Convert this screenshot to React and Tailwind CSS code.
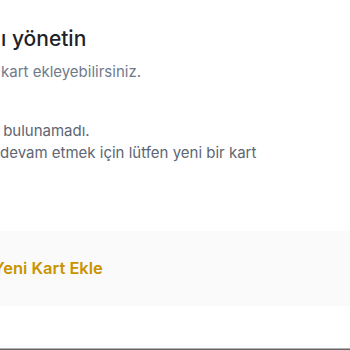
export default function App() {
    return (
        <div className="w-[350px] h-[350px] overflow-hidden bg-white flex flex-col" style={{ fontFamily: 'Inter, "Noto Sans", sans-serif' }}>
            {/* Header */}
            <div className="pt-[26px] pl-[1px]">
                <h2 className="text-[21px] leading-[26px] font-medium text-[#1e2329]">ı yönetin</h2>
                <p className="mt-[10px] text-[15px] leading-[20px] text-[#707a8a]">kart ekleyebilirsiniz.</p>
            </div>

            {/* Empty state */}
            <div className="mt-[38px] pl-0 text-[15px] leading-[22px] text-[#5e6673]">
                <p className="-ml-[6px]">t bulunamadı.</p>
                <p>devam etmek için lütfen yeni bir kart</p>
            </div>

            {/* Add card */}
            <div className="mt-[67px] h-[75px] bg-[#fafafa] flex items-center">
                <span className="-ml-[7px] text-[16.5px] font-semibold text-[#c99400]">Yeni Kart Ekle</span>
            </div>

            <div className="flex-1" />
            <div className="h-px bg-[#b0b0b0]" />
            <div className="h-px bg-[#666]" />
        </div>
    );
}
